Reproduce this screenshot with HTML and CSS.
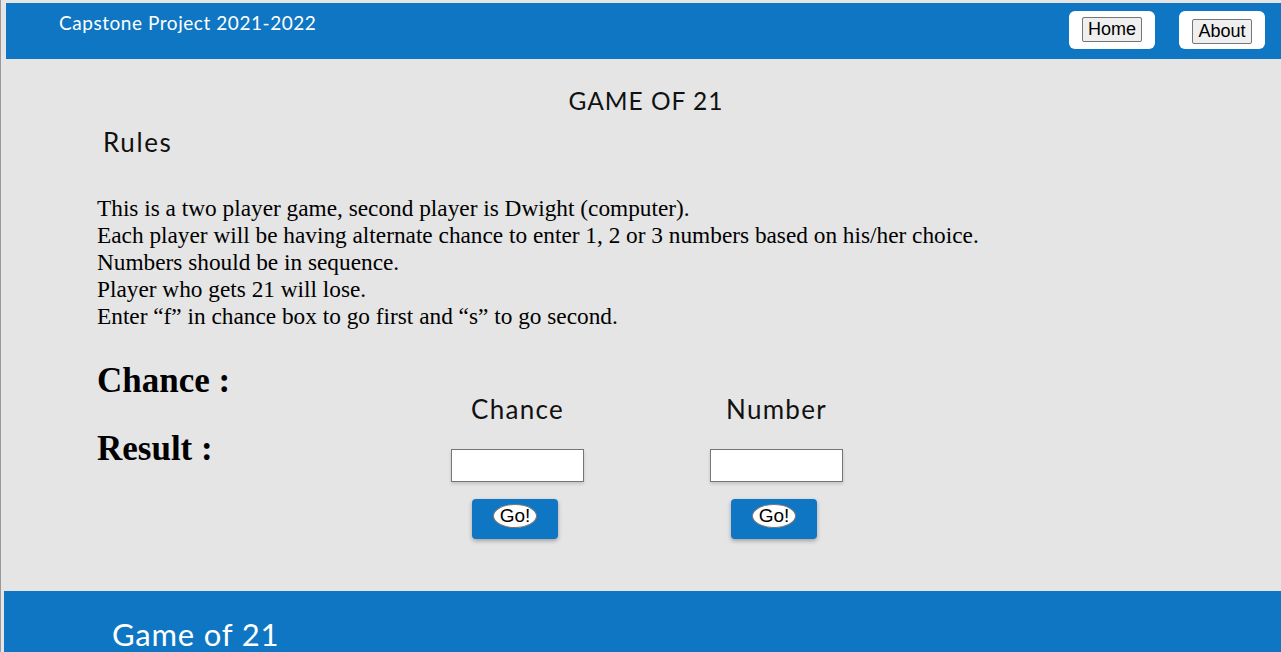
FILE: index.html
```html
<!DOCTYPE html>
<html>
<head>
<meta charset="utf-8">
<title>Game of 21</title>
<link rel="stylesheet" href="styles.css">
</head>
<body>
<div class="page">
  <header class="topbar">
    <div class="brand">Capstone Project 2021-2022</div>
    <nav class="nav">
      <div class="navbox"><button class="navbtn">Home</button></div>
      <div class="navbox navbox-low"><button class="navbtn">About</button></div>
    </nav>
  </header>
  <main class="main">
    <h2 class="title">GAME OF 21</h2>
    <div class="content">
      <h3 class="rules-head">Rules</h3>
      <div class="rules">
        This is a two player game, second player is Dwight (computer).<br>
        Each player will be having alternate chance to enter 1, 2 or 3 numbers based on his/her choice.<br>
        Numbers should be in sequence.<br>
        Player who gets 21 will lose.<br>
        Enter “f” in chance box to go first and “s” to go second.
      </div>
      <section class="game">
        <div class="status">
          <h1 class="status-line">Chance :</h1>
          <h1 class="status-line">Result :</h1>
        </div>
        <div class="control">
          <div class="control-label">Chance</div>
          <input class="field" type="text">
          <div class="gobox"><button class="gobtn">Go!</button></div>
        </div>
        <div class="control">
          <div class="control-label">Number</div>
          <input class="field" type="text">
          <div class="gobox"><button class="gobtn">Go!</button></div>
        </div>
      </section>
    </div>
  </main>
  <footer class="footer">
    <div class="footer-title">Game of 21</div>
  </footer>
</div>
</body>
</html>
```
FILE: styles.css
```css
html, body {
  margin: 0;
  padding: 0;
  background: #e5e5e5;
  overflow: hidden;
}
.page {
  border-left: 1px solid #9a9a9a;
  padding-top: 3px;
  min-height: 700px;
}
.topbar {
  margin-left: 5px;
  height: 56px;
  background: #0e76c2;
  display: flex;
  justify-content: space-between;
  align-items: flex-start;
}
.brand {
  font-family: Lato, "Open Sans", sans-serif;
  color: #fff;
  font-size: 19px;
  letter-spacing: 0.55px;
  padding-left: 53px;
  padding-top: 8px;
  line-height: 24px;
}
.nav {
  display: flex;
  gap: 24px;
  padding-top: 8px;
  padding-right: 16px;
}
.navbox {
  width: 86px;
  height: 38px;
  background: #fff;
  border-radius: 6px;
  display: flex;
  justify-content: center;
  align-items: flex-start;
  padding-top: 6px;
  box-sizing: border-box;
}
.navbox-low {
  padding-top: 8px;
}
.navbtn {
  font-family: "Liberation Sans", Arial, sans-serif;
  font-size: 18px;
  color: #000;
  background: #efefef;
  border: 1px solid #767676;
  border-radius: 2px;
  padding: 1px 5px;
  line-height: 21px;
}
.main {
  height: 532px;
  box-sizing: border-box;
}
.content {
  padding-left: 96px;
}
.title {
  font-family: Lato, "Open Sans", sans-serif;
  font-weight: 400;
  font-size: 24.5px;
  letter-spacing: 1px;
  text-align: center;
  margin: 0;
  padding-top: 27px;
  line-height: 30px;
  padding-left: 10px;
  color: #111;
}
.rules-head {
  font-family: Lato, "Open Sans", sans-serif;
  font-weight: 400;
  font-size: 26px;
  letter-spacing: 1.6px;
  margin: 11px 0 0 6px;
  line-height: 30px;
  color: #111;
}
.rules {
  font-family: "Liberation Serif", "Times New Roman", serif;
  font-size: 23.3px;
  line-height: 27px;
  color: #000;
  margin-top: 38px;
}
.game {
  display: flex;
  align-items: flex-start;
  margin-top: 24px;
}
.status {
  width: 354px;
  padding-top: 7px;
}
.status-line {
  font-family: "Liberation Serif", "Times New Roman", serif;
  font-weight: 700;
  font-size: 35px;
  line-height: 40px;
  margin: 0 0 28px 0;
  color: #000;
}
.control {
  width: 133px;
  display: flex;
  flex-direction: column;
  align-items: center;
  margin-right: 126px;
  padding-top: 40px;
}
.control-label {
  font-family: Lato, "Open Sans", sans-serif;
  font-size: 26px;
  letter-spacing: 1.3px;
  line-height: 30px;
  color: #111;
  white-space: nowrap;
}
.field {
  width: 133px;
  height: 33px;
  box-sizing: border-box;
  border: 1px solid #767676;
  background: #fff;
  margin-top: 25px;
  box-shadow: 0 2px 3px rgba(0,0,0,0.15);
}
.gobox {
  align-self: flex-start;
  margin-left: 21px;
  margin-top: 17px;
  width: 86px;
  height: 40px;
  background: #0e76c2;
  border-radius: 4px;
  box-shadow: 0 2px 4px rgba(0,0,0,0.3);
  display: flex;
  justify-content: center;
  align-items: flex-start;
  padding-top: 5px;
  box-sizing: border-box;
}
.gobtn {
  font-family: "Liberation Sans", Arial, sans-serif;
  font-size: 19px;
  color: #000;
  background: #fff;
  border: 1px solid #767676;
  border-radius: 50%;
  padding: 1px 6px;
  line-height: 20px;
}
.footer {
  margin-left: 3px;
  background: #0e76c2;
  height: 120px;
}
.footer-title {
  font-family: Lato, "Open Sans", sans-serif;
  color: #fff;
  font-size: 31px;
  letter-spacing: 0.8px;
  padding-left: 108px;
  padding-top: 26px;
  line-height: 34px;
}
```
